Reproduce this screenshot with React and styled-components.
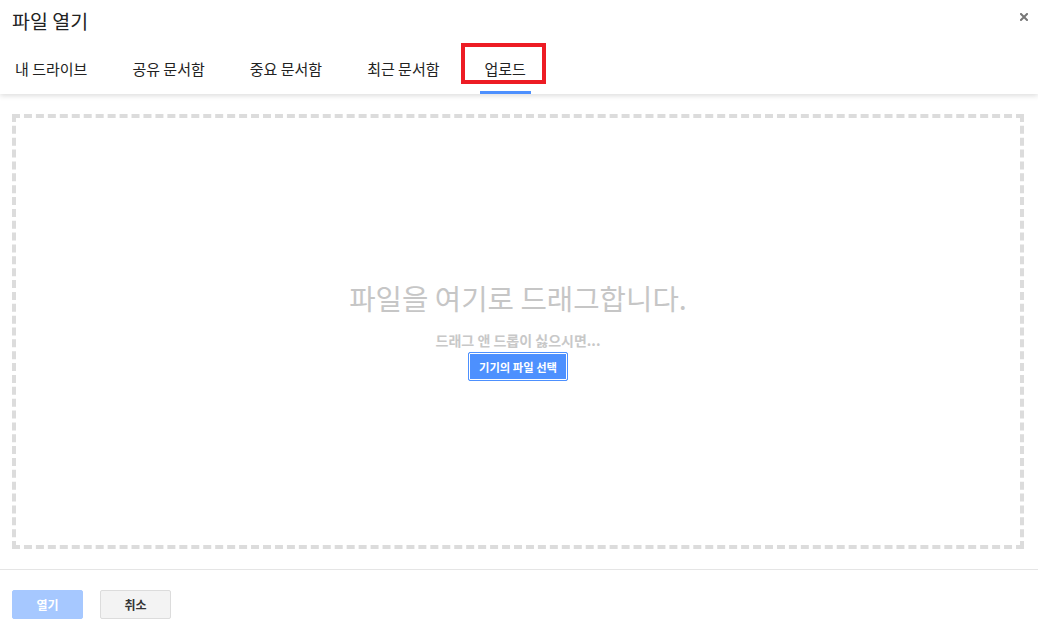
import React from "react";
import styled, { createGlobalStyle } from "styled-components";

const Global = createGlobalStyle`
  html, body { margin: 0; padding: 0; background: #fff; }
  body { font-family: "Noto Sans CJK KR", "Liberation Sans", Arial, sans-serif; }
  * { box-sizing: border-box; }
`;

const Dialog = styled.div`
  width: 1038px;
  height: 625px;
  display: flex;
  flex-direction: column;
  background: #fff;
  overflow: hidden;
`;

const Header = styled.header`
  height: 94px;
  display: flex;
  flex-direction: column;
  position: relative;
  z-index: 1;
  background: #fff;
  box-shadow: 0 2px 5px rgba(0, 0, 0, 0.13);
`;

const TitleRow = styled.div`
  height: 40px;
  display: flex;
  align-items: center;
  justify-content: space-between;
  padding: 0 10px 0 12px;
`;

const Title = styled.h1`
  margin: 0;
  font-size: 19.5px;
  font-weight: 400;
  line-height: 26px;
  color: #222;
  padding-top: 2px;
`;

const CloseButton = styled.button`
  border: 0;
  background: none;
  padding: 0;
  width: 8px;
  height: 8px;
  margin-top: -6px;
  display: flex;
  cursor: pointer;
`;

const Tabs = styled.nav`
  display: flex;
  height: 54px;
  padding-left: 10px;
  gap: 35px;
`;

const Tab = styled.div`
  position: relative;
  display: flex;
  align-items: center;
  padding: 7px 5px 0;
  font-size: 15px;
  line-height: 18px;
  color: #222;
  border-bottom: 3px solid ${(p) => (p.$active ? "#4d90fe" : "transparent")};
  white-space: nowrap;
`;

const Highlight = styled.span`
  position: absolute;
  left: -19px;
  right: -15px;
  top: 3px;
  bottom: 7px;
  border: 4px solid #ed1c24;
  pointer-events: none;
`;

const DropZone = styled.section`
  flex: 1;
  margin: 20px 14px 20px 12px;
  border: 4px dashed #dcdcdc;
  display: flex;
  flex-direction: column;
  align-items: center;
  justify-content: center;
`;

const DropTitle = styled.div`
  font-size: 28.7px;
  line-height: 32px;
  color: #c6c6c6;
`;

const DropHint = styled.div`
  margin-top: 17px;
  font-size: 14px;
  font-weight: 700;
  line-height: 18px;
  color: #c8c8c8;
`;

const PickButton = styled.button`
  margin-top: 3px;
  height: 29px;
  padding: 0 10px;
  background: #4d90fe;
  border: 1px solid #4d90fe;
  box-shadow: inset 0 0 0 1px #fff;
  border-radius: 2px;
  color: #fff;
  font-family: inherit;
  font-size: 11.3px;
  font-weight: 700;
  cursor: pointer;
`;

const Footer = styled.footer`
  height: 56px;
  border-top: 1px solid #e5e5e5;
  display: flex;
  align-items: flex-start;
  gap: 17px;
  padding: 20px 0 0 12px;
`;

const FooterButton = styled.button`
  width: 71px;
  height: 29px;
  border-radius: 2px;
  font-family: inherit;
  font-size: 12px;
  font-weight: 700;
  border: 1px solid ${(p) => (p.$primary ? "#a6c8ff" : "#dcdcdc")};
  background: ${(p) => (p.$primary ? "#a6c8ff" : "#f3f3f3")};
  color: ${(p) => (p.$primary ? "#fff" : "#333")};
  cursor: pointer;
`;

const tabs = ["내 드라이브", "공유 문서함", "중요 문서함", "최근 문서함", "업로드"];

export default function App() {
  return (
    <>
      <Global />
      <Dialog>
        <Header>
          <TitleRow>
            <Title>파일 열기</Title>
            <CloseButton aria-label="닫기">
              <svg width="8" height="8" viewBox="0 0 8 8">
                <path d="M1 1L7 7M7 1L1 7" stroke="#777" strokeWidth="2" strokeLinecap="square" />
              </svg>
            </CloseButton>
          </TitleRow>
          <Tabs>
            {tabs.map((t) => (
              <Tab key={t} $active={t === "업로드"}>
                {t}
                {t === "업로드" && <Highlight />}
              </Tab>
            ))}
          </Tabs>
        </Header>
        <DropZone>
          <DropTitle>파일을 여기로 드래그합니다.</DropTitle>
          <DropHint>드래그 앤 드롭이 싫으시면...</DropHint>
          <PickButton>기기의 파일 선택</PickButton>
        </DropZone>
        <Footer>
          <FooterButton $primary>열기</FooterButton>
          <FooterButton>취소</FooterButton>
        </Footer>
      </Dialog>
    </>
  );
}
